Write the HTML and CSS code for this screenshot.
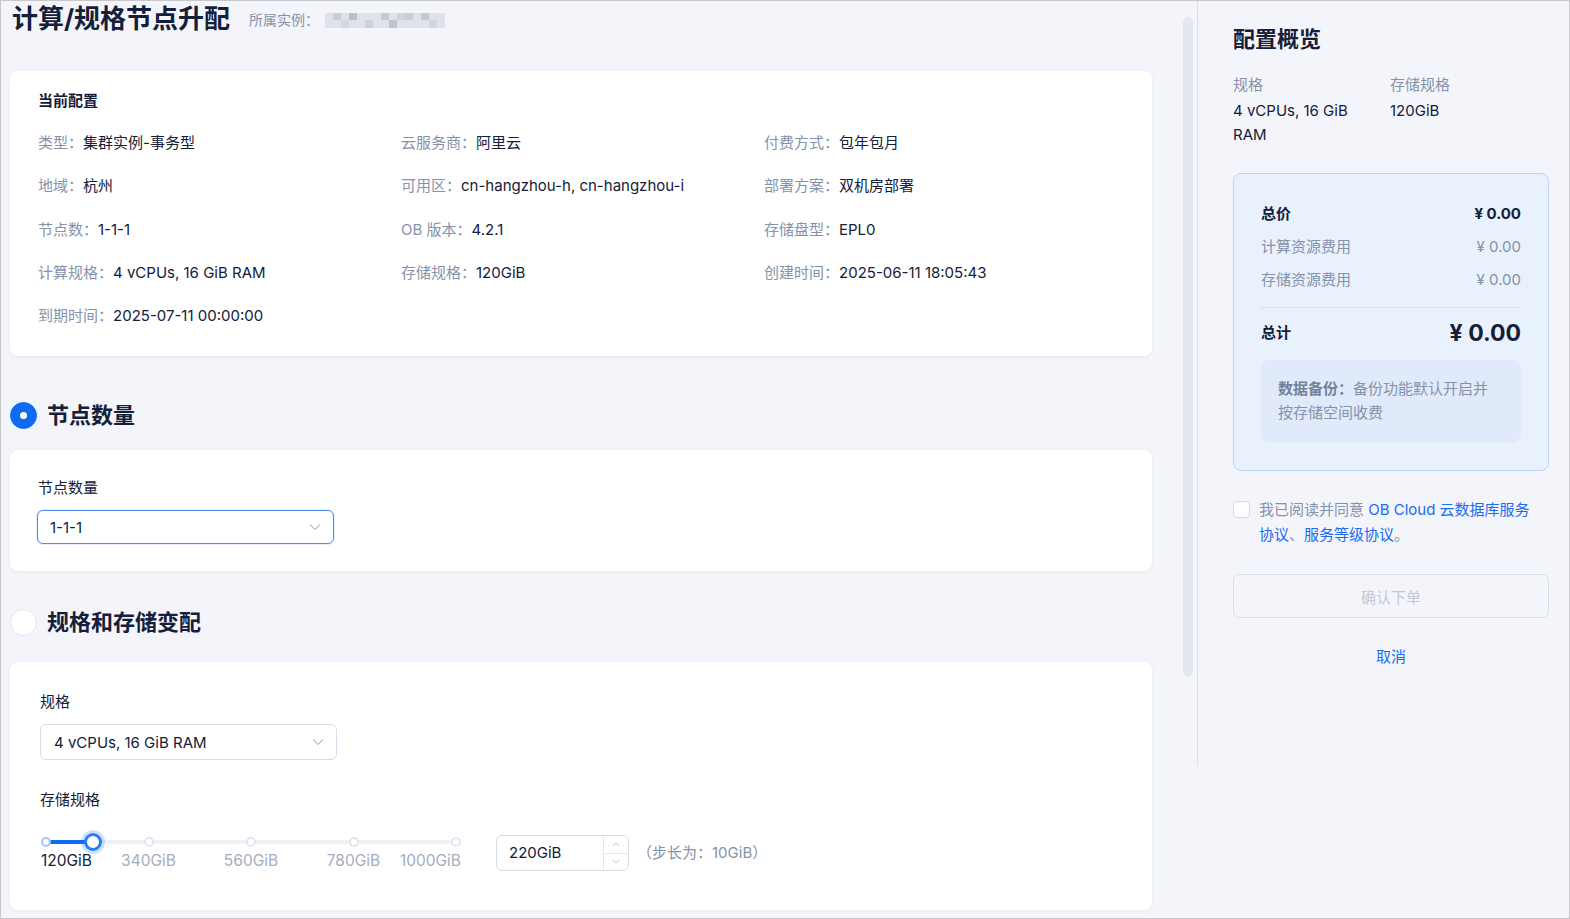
FILE: index.html
```html
<!DOCTYPE html>
<html lang="zh-CN">
<head>
  <meta charset="UTF-8">
  <title>计算/规格节点升配</title>
  <link rel="stylesheet" href="styles.css">
</head>
<body>
<div class="frame">
  <div class="main">
    <div class="content">
      <div class="page-head">
        <h1>计算/规格节点升配</h1>
        <span class="instance">所属实例：</span>
        <svg class="mosaic" width="120" height="15" viewBox="0 0 120 15">
          <rect x="0" y="0" width="120" height="15" fill="#dfe2ea"/>
          <rect x="8" y="0" width="8" height="7" fill="#c9cdd9"/>
          <rect x="24" y="0" width="8" height="7" fill="#b9bfcd"/>
          <rect x="40" y="7" width="8" height="8" fill="#cdd1dc"/>
          <rect x="56" y="0" width="8" height="7" fill="#c4c9d5"/>
          <rect x="64" y="7" width="8" height="8" fill="#bfc4d1"/>
          <rect x="80" y="0" width="8" height="7" fill="#c9cdd8"/>
          <rect x="96" y="0" width="8" height="7" fill="#c2c7d3"/>
          <rect x="104" y="7" width="8" height="8" fill="#d2d6df"/>
          <rect x="16" y="7" width="8" height="8" fill="#d4d7e0"/>
          <rect x="72" y="0" width="8" height="7" fill="#d1d4de"/>
        </svg>
      </div>

      <section class="card current">
        <h3>当前配置</h3>
        <div class="info-grid">
          <div class="info"><span class="k">类型：</span><span class="v">集群实例-事务型</span></div>
          <div class="info"><span class="k">云服务商：</span><span class="v">阿里云</span></div>
          <div class="info"><span class="k">付费方式：</span><span class="v">包年包月</span></div>
          <div class="info"><span class="k">地域：</span><span class="v">杭州</span></div>
          <div class="info"><span class="k">可用区：</span><span class="v">cn-hangzhou-h, cn-hangzhou-i</span></div>
          <div class="info"><span class="k">部署方案：</span><span class="v">双机房部署</span></div>
          <div class="info"><span class="k">节点数：</span><span class="v">1-1-1</span></div>
          <div class="info"><span class="k">OB 版本：</span><span class="v">4.2.1</span></div>
          <div class="info"><span class="k">存储盘型：</span><span class="v">EPL0</span></div>
          <div class="info"><span class="k">计算规格：</span><span class="v">4 vCPUs, 16 GiB RAM</span></div>
          <div class="info"><span class="k">存储规格：</span><span class="v">120GiB</span></div>
          <div class="info"><span class="k">创建时间：</span><span class="v">2025-06-11 18:05:43</span></div>
          <div class="info"><span class="k">到期时间：</span><span class="v">2025-07-11 00:00:00</span></div>
        </div>
      </section>

      <div class="section-title first"><span class="radio checked"></span>节点数量</div>
      <section class="card nodes">
        <div class="field-label">节点数量</div>
        <div class="select focused">
          <span>1-1-1</span>
          <svg width="12" height="8" viewBox="0 0 12 8"><path d="M1 1.5l5 5 5-5" fill="none" stroke="#b9c1cf" stroke-width="1.2"/></svg>
        </div>
      </section>

      <div class="section-title second"><span class="radio"></span>规格和存储变配</div>
      <section class="card spec">
        <div class="field-label">规格</div>
        <div class="select wide">
          <span>4 vCPUs, 16 GiB RAM</span>
          <svg width="12" height="8" viewBox="0 0 12 8"><path d="M1 1.5l5 5 5-5" fill="none" stroke="#b9c1cf" stroke-width="1.2"/></svg>
        </div>
        <div class="field-label storage">存储规格</div>
        <div class="storage-row">
          <div class="slider">
            <div class="rail">
              <div class="track" style="width:11.4%"></div>
              <span class="dot on" style="left:0%"></span>
              <span class="dot" style="left:25%"></span>
              <span class="dot" style="left:50%"></span>
              <span class="dot" style="left:75%"></span>
              <span class="dot" style="left:100%"></span>
              <span class="handle" style="left:11.4%"></span>
            </div>
            <div class="marks">
              <span class="mark first on">120GiB</span>
              <span class="mark" style="left:25%">340GiB</span>
              <span class="mark" style="left:50%">560GiB</span>
              <span class="mark" style="left:75%">780GiB</span>
              <span class="mark last">1000GiB</span>
            </div>
          </div>
          <div class="num-input">
            <span class="num-value">220GiB</span>
            <div class="num-handler">
              <span><svg width="8" height="5" viewBox="0 0 8 5"><path d="M1 4l3-3 3 3" fill="none" stroke="#b9c1cf"/></svg></span>
              <span><svg width="8" height="5" viewBox="0 0 8 5"><path d="M1 1l3 3 3-3" fill="none" stroke="#b9c1cf"/></svg></span>
            </div>
          </div>
          <span class="step">（步长为：10GiB）</span>
        </div>
      </section>
    </div>
    <div class="scroll-thumb"></div>
  </div>

  <aside class="summary">
    <h2>配置概览</h2>
    <div class="overview">
      <div>
        <div class="ov-k">规格</div>
        <div class="ov-v">4 vCPUs, 16 GiB RAM</div>
      </div>
      <div>
        <div class="ov-k">存储规格</div>
        <div class="ov-v">120GiB</div>
      </div>
    </div>

    <div class="price-box">
      <div class="price-row strong"><span>总价</span><span>¥ 0.00</span></div>
      <div class="price-row"><span>计算资源费用</span><span>¥ 0.00</span></div>
      <div class="price-row"><span>存储资源费用</span><span>¥ 0.00</span></div>
      <div class="price-divider"></div>
      <div class="price-total"><span>总计</span><span class="big">¥ 0.00</span></div>
      <div class="backup-note"><b>数据备份：</b>备份功能默认开启并按存储空间收费</div>
    </div>

    <div class="agree">
      <span class="checkbox"></span>
      <p>我已阅读并同意 <a href="#">OB Cloud 云数据库服务协议</a>、<a href="#">服务等级协议</a>。</p>
    </div>

    <button class="confirm" disabled>确认下单</button>
    <div class="cancel"><a href="#">取消</a></div>
  </aside>
</div>
</body>
</html>
```

FILE: styles.css
```css
* {
  box-sizing: border-box;
}
body {
  margin: 0;
  font-family: Inter, "Noto Sans CJK SC", sans-serif;
  color: #142039;
  background: #f3f5fa;
}
.frame {
  display: flex;
  width: 1570px;
  height: 919px;
  border: 1px solid #c6c8cc;
  background: #f3f5fa;
  overflow: hidden;
}
.main {
  flex: 0 0 1196px;
  display: flex;
}
.content {
  width: 1142px;
  margin-left: 9px;
}
.scroll-thumb {
  width: 10px;
  height: 660px;
  margin: 16px 0 0 31px;
  border-radius: 5px;
  background: #e2e7f0;
}

/* header */
.page-head {
  display: flex;
  align-items: center;
  height: 36px;
}
.page-head h1 {
  margin: 0 0 0 2px;
  font-size: 26px;
  line-height: 36px;
  font-weight: 700;
  color: #142039;
}
.instance {
  margin-left: 19px;
  font-size: 14px;
  color: #8592ab;
}
.mosaic {
  margin-left: 6px;
  margin-top: 2px;
}

/* cards */
.card {
  background: #fff;
  border-radius: 8px;
  box-shadow: 0 1px 4px rgba(30, 50, 90, 0.06);
}
.current {
  margin-top: 34px;
  padding: 19px 28px 29px;
}
.current h3 {
  margin: 0;
  font-size: 15px;
  line-height: 22px;
  font-weight: 700;
}
.info-grid {
  display: grid;
  grid-template-columns: repeat(3, 363px);
  grid-auto-rows: 22px;
  row-gap: 21.25px;
  margin-top: 20px;
}
.info {
  font-size: 15px;
  line-height: 22px;
  white-space: nowrap;
}
.info .k {
  color: #8592ab;
}
.info .v {
  color: #142039;
}

.section-title {
  display: flex;
  align-items: center;
  height: 28px;
  font-size: 22px;
  line-height: 28px;
  font-weight: 700;
}
.section-title.first {
  margin: 45px 0 21px;
}
.section-title.second {
  margin: 37px 0 26px;
}
.radio {
  width: 27px;
  height: 27px;
  margin-right: 10px;
  border-radius: 50%;
  background: #fff;
  border: 1px solid #e1e6ef;
  position: relative;
}
.radio.checked {
  background: #0d6cf2;
  border-color: #0d6cf2;
}
.radio.checked::after {
  content: "";
  position: absolute;
  left: 9px;
  top: 9px;
  width: 7px;
  height: 7px;
  border-radius: 50%;
  background: #fff;
}

.nodes {
  padding: 28px 28px 27px;
}
.field-label {
  font-size: 15px;
  line-height: 20px;
  color: #142039;
}
.select {
  display: flex;
  align-items: center;
  justify-content: space-between;
  width: 297px;
  height: 34px;
  margin-top: 12px;
  margin-left: -1px;
  padding: 0 12px;
  border: 1px solid #d6dce7;
  border-radius: 6px;
  font-size: 15px;
  background: #fff;
}
.select.focused {
  border-color: #4b8df6;
  box-shadow: 0 0 0 1px rgba(75, 141, 246, 0.15);
}
.select.wide {
  height: 36px;
  margin-left: 0;
  padding-left: 13px;
}

.spec {
  padding: 30px 30px 38px;
}
.field-label.storage {
  margin-top: 30px;
}
.storage-row {
  display: flex;
  align-items: flex-start;
  margin-top: 24px;
}
.slider {
  width: 420px;
  margin-left: 1px;
  padding: 0 5px;
}
.rail {
  position: relative;
  height: 4px;
  margin-top: 6px;
  border-radius: 2px;
  background: #eef1f6;
}
.track {
  height: 4px;
  border-radius: 2px;
  background: #0d6cf2;
}
.dot {
  position: absolute;
  top: -3px;
  width: 10px;
  height: 10px;
  margin-left: -5px;
  border-radius: 50%;
  background: #fff;
  border: 2px solid #e1e6ef;
}
.dot.on {
  border-color: #a8c6f8;
}
.handle {
  position: absolute;
  top: -7px;
  width: 18px;
  height: 18px;
  margin-left: -9px;
  border-radius: 50%;
  background: #fff;
  border: 3px solid #2a7ef5;
  box-shadow: 0 0 0 3px rgba(13, 108, 242, 0.2);
}
.marks {
  position: relative;
  height: 20px;
  margin-top: 7px;
  font-size: 15.5px;
  line-height: 20px;
  color: #a3adc0;
}
.mark {
  position: absolute;
  top: 0;
  transform: translateX(-50%);
  white-space: nowrap;
}
.mark.first {
  left: -5px;
  transform: none;
}
.mark.last {
  right: -5px;
  transform: none;
}
.mark.on {
  color: #142039;
}
.num-input {
  display: flex;
  width: 133px;
  height: 36px;
  margin-left: 35px;
  margin-top: 1px;
  border: 1px solid #d6dce7;
  border-radius: 6px;
  background: #fff;
}
.num-value {
  flex: 1;
  padding-left: 12px;
  font-size: 15px;
  line-height: 34px;
}
.num-handler {
  display: flex;
  flex-direction: column;
  width: 25px;
  border-left: 1px solid #e3e7ef;
}
.num-handler span {
  flex: 1;
  display: flex;
  align-items: center;
  justify-content: center;
}
.num-handler span + span {
  border-top: 1px solid #e3e7ef;
}
.step {
  margin-left: 8px;
  font-size: 15px;
  line-height: 38px;
  color: #8592ab;
}

/* summary */
.summary {
  flex: 0 0 372px;
  padding: 24px 20px 0 36px;
  background: linear-gradient(#dbe1ec, #dbe1ec) left top / 1px 765px no-repeat, #f3f5fa;
}
.summary h2 {
  margin: 0;
  font-size: 22px;
  line-height: 28px;
  font-weight: 700;
}
.overview {
  display: grid;
  grid-template-columns: 140px 1fr;
  column-gap: 17px;
  margin-top: 20px;
  font-size: 15px;
  line-height: 24px;
}
.ov-k {
  color: #8592ab;
  margin-bottom: 2px;
}
.ov-v {
  color: #142039;
}
.price-box {
  margin-top: 26px;
  padding: 28px 27px 28px;
  border: 1px solid #bcd4fb;
  border-radius: 8px;
  background: #e9f1fd;
  font-size: 15px;
}
.price-row {
  display: flex;
  justify-content: space-between;
  line-height: 24px;
  margin-top: 9px;
  color: #8592ab;
}
.price-row.strong {
  margin-top: 0;
  color: #142039;
  font-weight: 700;
}
.price-divider {
  height: 1px;
  margin-top: 15px;
  background: #d3e0f5;
}
.price-total {
  display: flex;
  justify-content: space-between;
  align-items: center;
  margin-top: 10px;
  line-height: 30px;
  font-weight: 700;
}
.price-total .big {
  font-size: 23px;
}
.backup-note {
  margin-top: 12px;
  padding: 17px 24px 17px 17px;
  border-radius: 8px;
  background: #e0eafb;
  line-height: 24px;
  color: #8592ab;
}
.backup-note b {
  color: #75819a;
}
.agree {
  display: flex;
  align-items: flex-start;
  margin-top: 26px;
}
.checkbox {
  flex: 0 0 17px;
  height: 17px;
  margin-top: 4px;
  border: 1px solid #d3d9e4;
  border-radius: 4px;
  background: #fff;
}
.agree p {
  max-width: 281px;
  margin: 0 0 0 9px;
  font-size: 15px;
  line-height: 25px;
  color: #8592ab;
}
.agree a {
  color: #1a6cf0;
  text-decoration: none;
}
.confirm {
  display: block;
  width: 100%;
  height: 44px;
  margin-top: 27px;
  border: 1px solid #d9dfe9;
  border-radius: 6px;
  background: transparent;
  font-family: inherit;
  font-size: 15px;
  color: #c2c9d6;
}
.cancel {
  margin-top: 27px;
  text-align: center;
  font-size: 15px;
  line-height: 24px;
}
.cancel a {
  color: #1a6cf0;
  text-decoration: none;
}
```
